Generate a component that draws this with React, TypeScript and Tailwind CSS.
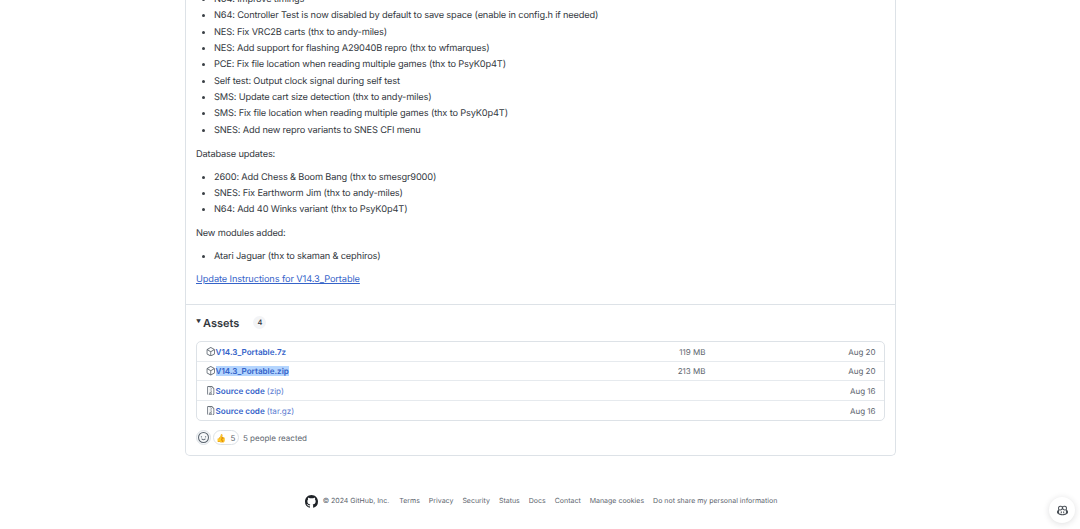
import { FC } from "react";

const changes = [
  "N64: Improve timings",
  "N64: Controller Test is now disabled by default to save space (enable in config.h if needed)",
  "NES: Fix VRC2B carts (thx to andy-miles)",
  "NES: Add support for flashing A29040B repro (thx to wfmarques)",
  "PCE: Fix file location when reading multiple games (thx to PsyK0p4T)",
  "Self test: Output clock signal during self test",
  "SMS: Update cart size detection (thx to andy-miles)",
  "SMS: Fix file location when reading multiple games (thx to PsyK0p4T)",
  "SNES: Add new repro variants to SNES CFI menu",
];
const database = [
  "2600: Add Chess & Boom Bang (thx to smesgr9000)",
  "SNES: Fix Earthworm Jim (thx to andy-miles)",
  "N64: Add 40 Winks variant (thx to PsyK0p4T)",
];
const assets = [
  { name: "V14.3_Portable.7z", size: "119 MB", date: "Aug 20", pkg: true },
  { name: "V14.3_Portable.zip", size: "213 MB", date: "Aug 20", pkg: true, selected: true },
  { name: "Source code", ext: "(zip)", date: "Aug 16" },
  { name: "Source code", ext: "(tar.gz)", date: "Aug 16" },
];
const footerLinks = ["Terms", "Privacy", "Security", "Status", "Docs", "Contact", "Manage cookies", "Do not share my personal information"];

const BulletList: FC<{ items: string[] }> = ({ items }) => (
  <ul className="list-disc pl-[18px] marker:text-[#3a3f45]">
    {items.map((item) => (
      <li key={item} className="h-[16.35px] leading-[16.35px]">{item}</li>
    ))}
  </ul>
);

const PackageIcon = () => (
  <svg viewBox="0 0 16 16" className="w-[9.5px] h-[9.5px] shrink-0 text-[#6b737c]" fill="currentColor">
    <path d="m8.878.392 5.25 3.045c.54.314.872.89.872 1.514v6.098a1.75 1.75 0 0 1-.872 1.514l-5.25 3.045a1.75 1.75 0 0 1-1.756 0l-5.25-3.045A1.75 1.75 0 0 1 1 11.049V4.951c0-.624.332-1.201.872-1.514L7.122.392a1.75 1.75 0 0 1 1.756 0ZM7.875 1.69l-4.63 2.685L8 7.133l4.755-2.758-4.63-2.685a.248.248 0 0 0-.25 0ZM2.5 5.677v5.372c0 .09.047.171.125.216l4.625 2.683V8.432Zm6.25 8.271 4.625-2.683a.25.25 0 0 0 .125-.216V5.677L8.75 8.432Z" />
  </svg>
);

const ZipIcon = () => (
  <svg viewBox="0 0 16 16" className="w-[9.5px] h-[9.5px] shrink-0 text-[#6b737c]" fill="currentColor">
    <path d="M3.5 1.75v11.5c0 .09.048.173.126.217a.75.75 0 0 1-.752 1.298A1.748 1.748 0 0 1 2 13.25V1.75C2 .784 2.784 0 3.75 0h5.586c.464 0 .909.185 1.237.513l2.914 2.914c.329.328.513.773.513 1.237v8.586A1.75 1.75 0 0 1 12.25 15h-.5a.75.75 0 0 1 0-1.5h.5a.25.25 0 0 0 .25-.25V4.664a.25.25 0 0 0-.073-.177L9.513 1.573a.25.25 0 0 0-.177-.073H7.25a.75.75 0 0 1 0 1.5h-.5a.75.75 0 0 1 0-1.5h-3a.25.25 0 0 0-.25.25Zm3.75 8.75h.5c.966 0 1.75.784 1.75 1.75v3a.75.75 0 0 1-.75.75h-2.5a.75.75 0 0 1-.75-.75v-3c0-.966.784-1.75 1.75-1.75ZM6 5.25a.75.75 0 0 1 .75-.75h.5a.75.75 0 0 1 0 1.5h-.5A.75.75 0 0 1 6 5.25Zm.75 2.25h.5a.75.75 0 0 1 0 1.5h-.5a.75.75 0 0 1 0-1.5ZM8 6.75A.75.75 0 0 1 8.75 6h.5a.75.75 0 0 1 0 1.5h-.5A.75.75 0 0 1 8 6.75ZM8.75 3h.5a.75.75 0 0 1 0 1.5h-.5a.75.75 0 0 1 0-1.5ZM8 9.75A.75.75 0 0 1 8.75 9h.5a.75.75 0 0 1 0 1.5h-.5A.75.75 0 0 1 8 9.75Zm-1 2.5v2.25h1v-2.25a.25.25 0 0 0-.25-.25h-.5a.25.25 0 0 0-.25.25Z" />
  </svg>
);

const SmileyIcon = () => (
  <svg viewBox="0 0 16 16" className="w-[11px] h-[11px] text-[#59636e]" fill="currentColor">
    <path d="M8 0a8 8 0 1 1 0 16A8 8 0 0 1 8 0ZM1.5 8a6.5 6.5 0 1 0 13 0 6.5 6.5 0 0 0-13 0Zm3.82 1.636a.75.75 0 0 1 1.038.175l.007.009c.103.118.22.222.35.31.264.178.683.37 1.285.37.602 0 1.02-.192 1.285-.371.13-.088.247-.192.35-.31l.007-.008a.75.75 0 0 1 1.222.87l-.022-.015c.02.013.021.015.021.015v.001l-.001.002-.002.003-.005.007-.014.019a2.066 2.066 0 0 1-.184.213c-.16.166-.338.316-.53.445-.63.418-1.37.638-2.127.629-.946 0-1.652-.308-2.126-.63a3.331 3.331 0 0 1-.715-.657l-.014-.02-.005-.006-.002-.003v-.002h-.001l.613-.432-.614.43a.75.75 0 0 1 .183-1.044ZM12 7a1 1 0 1 1-2 0 1 1 0 0 1 2 0ZM5 8a1 1 0 1 1 0-2 1 1 0 0 1 0 2Z" />
  </svg>
);

const GitHubMark = () => (
  <svg viewBox="0 0 16 16" className="w-[13px] h-[13px]" fill="#1f2328">
    <path d="M8 0c4.42 0 8 3.58 8 8a8.013 8.013 0 0 1-5.45 7.59c-.4.08-.55-.17-.55-.38 0-.27.01-1.13.01-2.2 0-.75-.25-1.23-.54-1.48 1.78-.2 3.65-.88 3.65-3.95 0-.88-.31-1.59-.82-2.15.08-.2.36-1.02-.08-2.12 0 0-.67-.22-2.2.82-.64-.18-1.32-.27-2-.27-.68 0-1.36.09-2 .27-1.53-1.03-2.2-.82-2.2-.82-.44 1.1-.16 1.92-.08 2.12-.51.56-.82 1.28-.82 2.15 0 3.06 1.86 3.75 3.64 3.95-.23.2-.44.55-.51 1.07-.46.21-1.61.55-2.33-.66-.15-.24-.6-.83-1.23-.82-.67.01-.27.38.01.53.34.19.73.9.82 1.13.16.45.68 1.31 2.69.94 0 .67.01 1.3.01 1.49 0 .21-.15.45-.55.38A7.995 7.995 0 0 1 0 8c0-4.42 3.58-8 8-8Z" />
  </svg>
);

const CopilotIcon = () => (
  <svg viewBox="0 0 16 16" className="w-[11px] h-[11px]" fill="#4b5158">
    <path d="M7.998 15.035c-4.562 0-7.873-2.914-7.998-3.749V9.338c.085-.628.677-1.686 1.588-2.065.013-.07.024-.143.036-.218.029-.183.06-.384.126-.612-.201-.508-.254-1.084-.254-1.656 0-.87.128-1.769.693-2.484.579-.733 1.494-1.124 2.724-1.261 1.206-.134 2.262.034 2.944.765.05.053.096.108.139.165.044-.057.094-.112.143-.165.682-.731 1.738-.899 2.944-.765 1.23.137 2.145.528 2.724 1.261.566.715.693 1.614.693 2.484 0 .572-.053 1.148-.254 1.656.066.228.098.429.126.612.012.076.024.148.037.218.924.385 1.522 1.471 1.591 2.095v1.872c0 .766-3.351 3.795-8.002 3.795Zm0-1.485c2.28 0 4.584-1.11 5.002-1.433V7.862l-.023-.116c-.49.21-1.075.291-1.727.291-1.146 0-2.059-.327-2.71-.991A3.222 3.222 0 0 1 8 6.303a3.24 3.24 0 0 1-.544.743c-.65.664-1.563.991-2.71.991-.652 0-1.236-.081-1.727-.291l-.023.116v4.255c.419.323 2.722 1.433 5.002 1.433ZM6.762 2.83c-.193-.206-.637-.413-1.682-.297-1.019.113-1.479.404-1.713.7-.247.312-.369.789-.369 1.554 0 .793.129 1.171.308 1.371.162.181.519.379 1.442.379.853 0 1.339-.235 1.638-.54.315-.322.527-.827.617-1.553.117-.935-.037-1.395-.241-1.614Zm4.155-.297c-1.044-.116-1.488.091-1.681.297-.204.219-.359.679-.242 1.614.091.726.303 1.231.618 1.553.299.305.784.54 1.638.54.922 0 1.28-.198 1.442-.379.179-.2.308-.578.308-1.371 0-.765-.123-1.242-.37-1.554-.233-.296-.693-.587-1.713-.7Z" />
    <path d="M6.25 9.037a.75.75 0 0 1 .75.75v1.501a.75.75 0 0 1-1.5 0V9.787a.75.75 0 0 1 .75-.75Zm4.25.75v1.501a.75.75 0 0 1-1.5 0V9.787a.75.75 0 0 1 1.5 0Z" />
  </svg>
);

export default function App() {
  return (
    <div className="relative h-[529px] w-[1080px] overflow-hidden bg-white font-['Inter',sans-serif] text-[9.25px] tracking-[-0.16px] text-[#33383e] [text-rendering:geometricPrecision]">
      <div className="ml-[185px] -mt-[9px] h-[465px] w-[711px] rounded-b-[5px] border border-t-0 border-[#dde2e7] flex flex-col">
        <div className="px-[10px] pt-[1px]">
          <BulletList items={changes} />
          <p className="mt-[7.5px] h-[16px] leading-[16px]">Database updates:</p>
          <div className="mt-[7px]"><BulletList items={database} /></div>
          <p className="mt-[7px] h-[16px] leading-[16px]">New modules added:</p>
          <div className="mt-[7px]"><BulletList items={["Atari Jaguar (thx to skaman & cephiros)"]} /></div>
          <p className="mt-[7px] h-[16px] leading-[16px]">
            <a className="text-[#3563c9] underline tracking-[-0.11px]">Update Instructions for V14.3_Portable</a>
          </p>
        </div>

        <div className="mt-[16px] border-t border-[#dde2e7] px-[10px] pt-[9px]">
          <div className="flex h-[18px] items-center">
            <span className="text-[5px] mr-[2px] tracking-normal">▼</span>
            <span className="text-[11px] font-semibold leading-[18px] tracking-normal">Assets</span>
            <span className="ml-[14px] flex h-[13px] w-[13px] items-center justify-center rounded-full bg-[#f3f4f6] text-[7.5px] font-medium">4</span>
          </div>

          <div className="mt-[9.5px] rounded-[5px] border border-[#dde2e7] divide-y divide-[#e6eaee]">
            {assets.map((asset) => (
              <div key={asset.name + asset.date + asset.ext} className="flex h-[19.5px] items-center pl-[9px] pr-[8.5px]">
                {asset.pkg ? <PackageIcon /> : <ZipIcon />}
                <span className="font-semibold text-[8.1px] tracking-[0px] text-[#3563c9]">
                  <span className={asset.selected ? "bg-[#b4d5fe]" : ""}>{asset.name}</span>
                  {asset.ext && <span className="ml-[2px] font-normal text-[#5a7bd0]">{asset.ext}</span>}
                </span>
                <span className="ml-auto text-[8px] tracking-[0px] text-[#5c646d]">{asset.size}</span>
                <span className="w-[170px] shrink-0 text-right text-[8px] tracking-[0px] text-[#5c646d]">{asset.date}</span>
              </div>
            ))}
          </div>

          <div className="mt-[9px] flex items-center">
            <span className="flex h-[15px] w-[15px] items-center justify-center rounded-full border border-[#dde2e7] bg-[#f6f8fa]"><SmileyIcon /></span>
            <span className="ml-[2px] flex h-[15px] w-[26px] items-center justify-center gap-[4px] rounded-full border border-[#dde2e7] text-[8px] text-[#5c646d]">
              <span className="text-[8px]">👍</span>5
            </span>
            <span className="ml-[4px] text-[8px] tracking-[0px] text-[#5c646d]">5 people reacted</span>
          </div>
        </div>
      </div>

      <footer className="mt-[39px] flex items-center justify-center pl-[2px] text-[7px] tracking-[0px] text-[#5c646d]">
        <GitHubMark />
        <span className="ml-[5px]">© 2024 GitHub, Inc.</span>
        <nav className="ml-[10px] flex gap-[9px]">
          {footerLinks.map((link) => <a key={link}>{link}</a>)}
        </nav>
      </footer>

      <div className="absolute left-[1049px] top-[497px] flex h-[26px] w-[26px] items-center justify-center rounded-full bg-white shadow-[0_1px_6px_rgba(31,35,40,0.15)]">
        <CopilotIcon />
      </div>
    </div>
  );
}
